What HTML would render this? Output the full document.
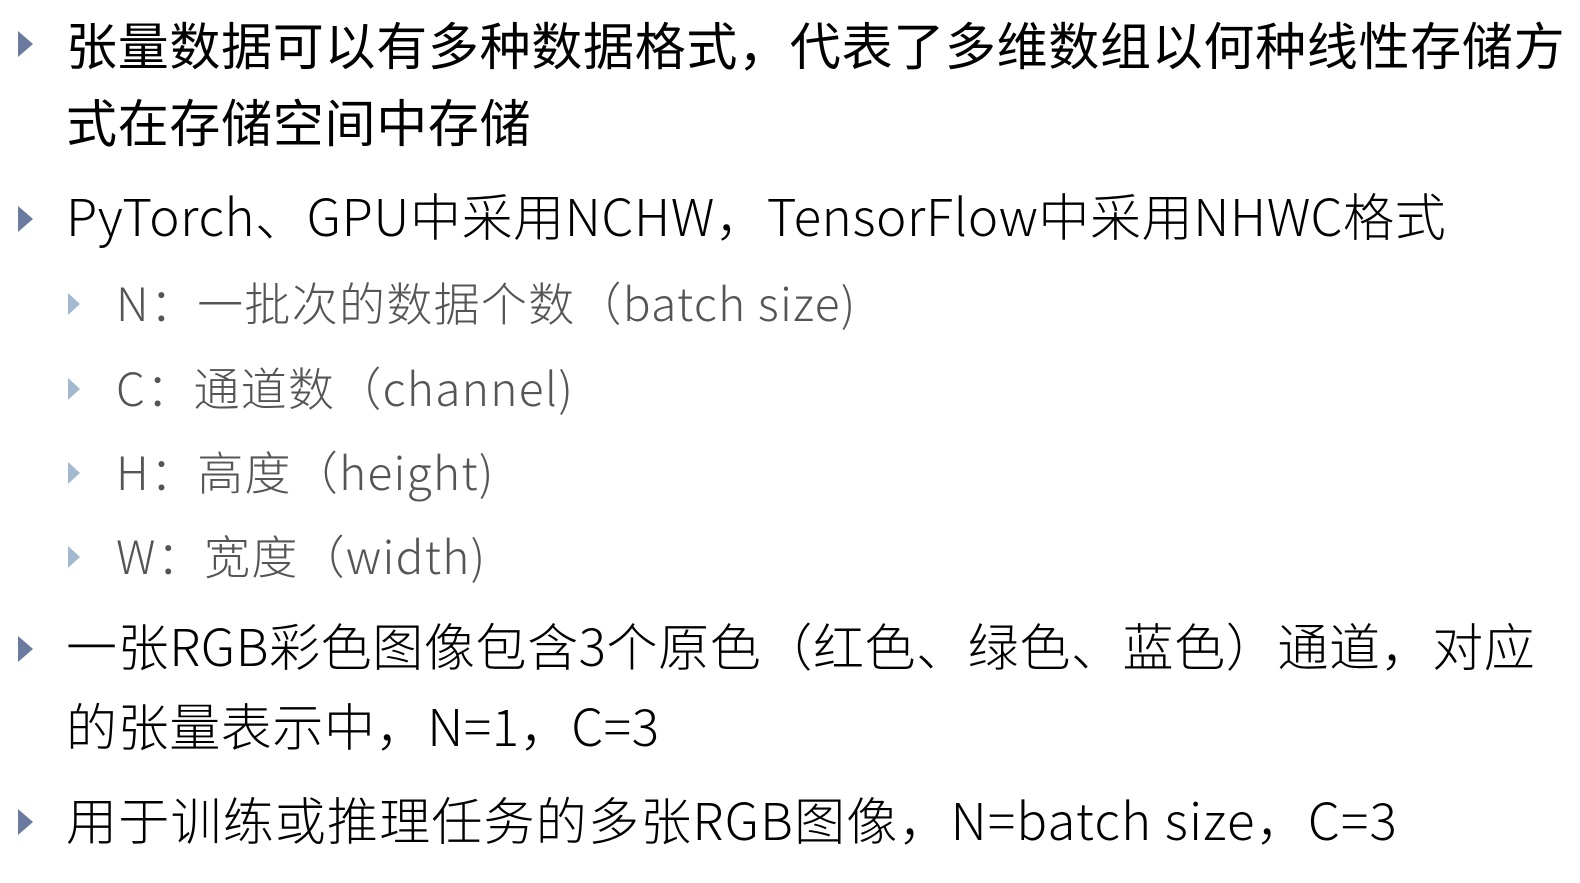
<!DOCTYPE html>
<html><head><meta charset="utf-8"><style>
html,body{margin:0;padding:0;background:#fff;width:1580px;height:883px;overflow:hidden}
.l{position:absolute;white-space:nowrap;font-family:"Noto Sans CJK SC","Liberation Sans",sans-serif;font-weight:300;color:#000;line-height:1}
.m{font-size:51px;left:66px;letter-spacing:0.6px}
.b{font-weight:400;letter-spacing:0.7px}
.s{font-size:46px;left:116px;color:#555;letter-spacing:1.3px}
.t{position:absolute;width:0;height:0;border-top:13px solid transparent;border-bottom:13px solid transparent;border-left:15px solid #6b7a9f}
.ts{border-top:11px solid transparent;border-bottom:11px solid transparent;border-left:12px solid #a3b9cf}
</style></head><body>
<div class="t" style="left:18px;top:31px"></div>
<div class="l m b" style="top:18px">张量数据可以有多种数据格式，代表了多维数组以何种线性存储方</div>
<div class="l m b" style="top:95px">式在存储空间中存储</div>
<div class="t" style="left:18px;top:206px"></div>
<div class="l m" style="top:189px">PyTorch、GPU中采用NCHW，TensorFlow中采用NHWC格式</div>
<div class="t ts" style="left:68px;top:293px"></div>
<div class="l s" style="top:279px">N：一批次的数据个数（batch size)</div>
<div class="t ts" style="left:68px;top:378px"></div>
<div class="l s" style="top:364px">C：通道数（channel)</div>
<div class="t ts" style="left:68px;top:462px"></div>
<div class="l s" style="top:448px">H：高度（height)</div>
<div class="t ts" style="left:68px;top:546px"></div>
<div class="l s" style="top:532px">W：宽度（width)</div>
<div class="t" style="left:18px;top:636px"></div>
<div class="l m" style="top:619px">一张RGB彩色图像包含3个原色（红色、绿色、蓝色）通道，对应</div>
<div class="l m" style="top:699px">的张量表示中，N=1，C=3</div>
<div class="t" style="left:18px;top:809px"></div>
<div class="l m" style="top:793px;letter-spacing:1.2px">用于训练或推理任务的多张RGB图像，N=batch size，C=3</div>
</body></html>
